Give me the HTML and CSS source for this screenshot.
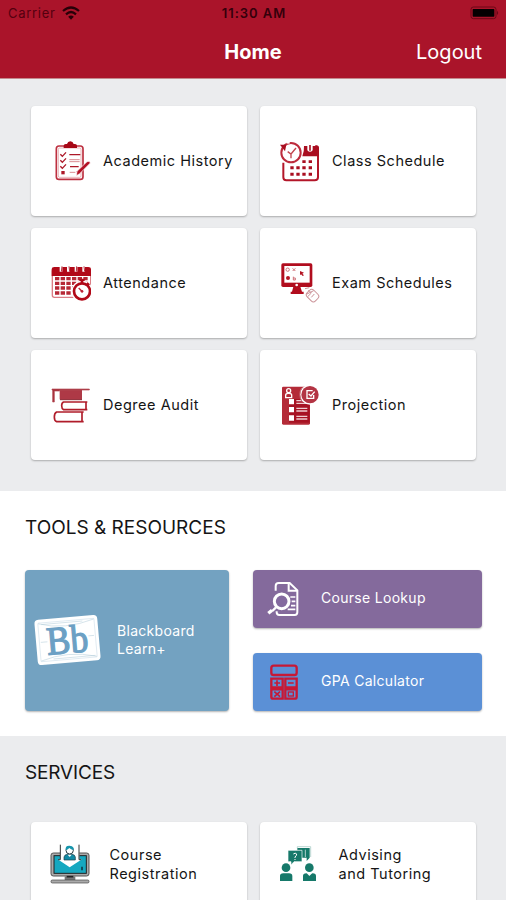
FILE: index.html
```html
<!DOCTYPE html>
<html lang="en">
<head>
<meta charset="utf-8">
<title>Home</title>
<link rel="stylesheet" href="styles.css">
</head>
<body>
<header class="header">
  <div class="status">
    <div class="status-left"><span class="carrier">Carrier</span>
      <svg class="wifi" viewBox="0 0 54 42"><g fill="none" stroke="#280008" stroke-width="6.5"><path d="M3 15Q27-6 51 15"/><path d="M12 25Q27 11 42 25"/></g><path d="M27 41L18.500 32Q27 25 35.500 32Z" fill="#280008"/></svg>
    </div>
    <span class="time">11:30 AM</span>
    <svg class="battery" viewBox="0 0 90 42"><rect x="3" y="3" width="75" height="35" rx="7" fill="none" stroke="#6c0717" stroke-width="3"/><rect x="8" y="9" width="65" height="23" rx="2" fill="#050001"/><path d="M81 14Q88 20 81 27Z" fill="#6c0717"/></svg>
  </div>
  <div class="nav"><h1 class="title">Home</h1><a class="logout">Logout</a></div>
</header>

<main>
<section class="grid">
  <div class="card">
    <svg class="icon" viewBox="0 0 120 126"><rect x="16" y="18" width="80" height="100" rx="8" fill="#fff" stroke="#bd3040" stroke-width="5"/><rect x="22" y="24" width="68" height="88" rx="4" fill="none" stroke="#df9298" stroke-width="2"/><path d="M38 24V17Q38 12 44 12H48Q50 4 58 4T68 12H72Q78 12 78 17V24Z" fill="#a70816"/><g fill="none" stroke="#ad1828" stroke-width="4"><path d="M28 43l6 6 11-12M28 61l6 6 11-12M28 79l6 6 11-12M55 44H88M57 80H83"/><path d="M55 59H86M55 65H86M56 97H73" stroke="#db8d92" stroke-width="3"/></g><rect x="31" y="93" width="10" height="10" fill="#ad1828"/><path d="M76 107L78 94L108 65Q116 61 118 69L86 101Z" fill="#b31225" stroke="#fff" stroke-width="2"/></svg>
    <span class="label">Academic History</span>
  </div>
  <div class="card">
    <svg class="icon" viewBox="0 0 120 126"><path d="M10 68V112Q10 121 19 121H104Q114 121 114 112V25Q114 18 106 18" fill="none" stroke="#b31629" stroke-width="6"/><path d="M72 18H82V31Q90 40 98 31V18H110Q117 18 117 25V49H67Q73 33 72 18Z" fill="#a90e20"/><path d="M90 15V32" stroke="#b73c4a" stroke-width="6"/><g fill="#a90e20"><path d="M67 61h10v8h-10zM86 61h10v8h-10zM31 79h10v9h-10zM49 79h10v9h-10zM67 79h10v9h-10zM86 79h10v9h-10zM31 98h10v9h-10zM49 98h10v9h-10zM67 98h10v9h-10zM86 98h10v9h-10z"/></g><circle cx="33" cy="38" r="29" fill="#fff" stroke="#bd2b3c" stroke-width="6"/><path d="M0 14L19 14L15 34Z" fill="#a90e20"/><path d="M20 7l9 1" stroke="#fff" stroke-width="7"/><path d="M23 35l10 7L48 24M33 42V55" fill="none" stroke="#c2454e" stroke-width="4"/></svg>
    <span class="label">Class Schedule</span>
  </div>
  <div class="card">
    <svg class="icon" viewBox="0 0 120 126"><rect x="4" y="22" width="115" height="84" rx="6" fill="#fff" stroke="#db7e86" stroke-width="4"/><path d="M2 42V21Q2 15 10 15H112Q120 15 120 21V42Z" fill="#b10918"/><path d="M30 11V29M52 11V29M75 11V29M98 11V29" stroke="#fff" stroke-width="8"/><path d="M33 13l-2 16M54 13l2 16M77 13l-1 16M99 13l2 16" stroke="#b73441" stroke-width="3"/><g stroke="#b62836" stroke-width="10" stroke-dasharray="13 4" fill="none"><path d="M12 50H114M12 64H114M12 78H90M12 93H70"/></g><circle cx="93" cy="88" r="32" fill="#fff"/><circle cx="93" cy="88" r="24" fill="#fff" stroke="#b10918" stroke-width="8"/><path d="M85 50H101V57H97V64H89V57H85ZM110 61L117 67L112 72L105 66Z" fill="#b10918"/><path d="M83 78L95 90" stroke="#bd2336" stroke-width="4"/><circle cx="93" cy="88" r="4" fill="#bd2336"/></svg>
    <span class="label">Attendance</span>
  </div>
  <div class="card">
    <svg class="icon" viewBox="0 0 120 126"><rect x="4" y="4" width="93" height="71" rx="5" fill="#b10d1e"/><path d="M13 12H89V62H13Z" fill="#fff"/><path d="M40 74H61L66 89H71V96H32V89H36Z" fill="#b10d1e"/><circle cx="50" cy="69" r="4" fill="#fff"/><g fill="none" stroke="#cf7279" stroke-width="3"><circle cx="23" cy="23" r="5"/><path d="M38 19l8 8M46 19l-8 8M40 44v10h6v-6h-6"/></g><circle cx="24" cy="48" r="6" fill="#b41423"/><path d="M60 27L72 32L67 35L72 40L68 42L63 37L60 40Z" fill="#b41423"/><g fill="none" stroke="#cb9298" stroke-width="3"><rect x="84" y="83" width="28" height="35" rx="9" transform="rotate(-45 98 101)"/><path d="M81 96L101 86M94 106L103 96M85 84L94 93L83 104M75 80l13-3"/></g></svg>
    <span class="label">Exam Schedules</span>
  </div>
  <div class="card">
    <svg class="icon" viewBox="0 0 120 126"><path d="M26 18H93V46H26Z" fill="#ae3946"/><path d="M3 18V15H115V18H26V21H10V54H5V20Z" fill="#a82e3a" stroke="#b24b54" stroke-width="2"/><path d="M27 47H93" stroke="#871d29" stroke-width="3"/><g fill="#fff" stroke="#b01c2a" stroke-width="5"><path d="M109 54H38Q32 56 32 65T38 77H109M105 54V77"/><path d="M98 84H17Q10 87 10 99T17 113H98M93 84V113"/></g></svg>
    <span class="label">Degree Audit</span>
  </div>
  <div class="card">
    <svg class="icon" viewBox="0 0 120 126"><rect x="6" y="8" width="84" height="114" rx="4" fill="#b42b38"/><path d="M27 45H89V116H27Z" fill="#a71223"/><circle cx="26" cy="20" r="6" fill="none" stroke="#fff" stroke-width="4"/><path d="M17 41V33Q17 28 26 28T35 33V41Z" fill="none" stroke="#fff" stroke-width="4"/><path d="M27 45h15v16h-15zM27 69h15v16h-15zM27 94h15v16h-15z" fill="#fff"/><path d="M49 50H72M49 58H82M49 73H82M49 81H82M49 97H82M49 105H82" stroke="#f0ccd0" stroke-width="4"/><circle cx="90" cy="32" r="30" fill="#fff"/><circle cx="90" cy="32" r="26" fill="#b33443"/><path d="M65 12Q54 31 65 51" fill="none" stroke="#c76e78" stroke-width="3"/><path d="M101 33V43H81V20H98M86 30l7 6 11-13" fill="none" stroke="#fff" stroke-width="4"/></svg>
    <span class="label">Projection</span>
  </div>
</section>

<section class="tools">
  <h2 class="heading">TOOLS &amp; RESOURCES</h2>
  <div class="tool-grid">
    <div class="tile blackboard">
      <svg class="bb" viewBox="0 0 204 162"><g transform="rotate(-5 102 81)"><rect x="6" y="13" width="189" height="136" rx="12" fill="#fff"/><rect x="16" y="23" width="169" height="116" rx="2" fill="none" stroke="#c5d9e6" stroke-width="1.500"/><path d="M17 25Q95 51 184 25M17 137Q98 112 184 137M26 28H150M54 134H180M20 81H40M164 74H181" stroke="#afcad9" stroke-width="1.500" fill="none"/><text x="38" y="120" textLength="124" lengthAdjust="spacingAndGlyphs" font-family="Liberation Serif, serif" font-size="119" fill="#6ca0c4" stroke="#6ca0c4" stroke-width="4">Bb</text></g></svg>
      <span class="tile-label">Blackboard<br>Learn+</span>
    </div>
    <div class="tool-stack">
      <div class="tile lookup">
        <svg class="tool-icon" viewBox="0 0 102 108"><path d="M26 29V15Q26 6 35 6H68L91 28V94Q91 102 83 102H37Q29 102 29 94V91" fill="none" stroke="#fff" stroke-width="6"/><path d="M65 6V29H91" fill="none" stroke="#fff" stroke-width="6"/><path d="M70 48H85M74 61H85M72 74H85M62 85H85" stroke="#fff" stroke-width="5"/><circle cx="44" cy="61" r="22" fill="#846a9f" stroke="#fff" stroke-width="9"/><path d="M27 79L16 90" stroke="#fff" stroke-width="7"/><path d="M15 88L4 97" stroke="#fff" stroke-width="10"/></svg>
        <span class="tile-label">Course Lookup</span>
      </div>
      <div class="tile gpa">
        <svg class="tool-icon" viewBox="0 0 102 108"><g fill="none" stroke="#c71835" stroke-width="7"><rect x="13" y="5" width="76" height="28" rx="7"/><path d="M13 44H47V70H13ZM55 44H89V70H55ZM13 76H47V104H19Q13 104 13 98ZM55 76H89V98Q89 104 83 104H55Z"/><path d="M22 57H39M30 49V66M63 57H80M22 83L39 98M39 83L22 98" stroke-width="5"/><rect x="64" y="84" width="15" height="12" stroke-width="4"/></g></svg>
        <span class="tile-label">GPA Calculator</span>
      </div>
    </div>
  </div>
</section>

<section class="services">
  <h2 class="heading">SERVICES</h2>
  <div class="service-grid">
    <div class="card service">
      <svg class="icon" viewBox="0 0 120 126"><rect x="3" y="30" width="114" height="69" rx="7" fill="#aaa" stroke="#555" stroke-width="3"/><rect x="12" y="38" width="97" height="53" fill="#16a8c0" stroke="#222" stroke-width="3"/><path d="M44 100H76V112H44Z" fill="#777"/><path d="M50 101H70" stroke="#222" stroke-width="5"/><rect x="3" y="111" width="114" height="9" rx="4" fill="#aaa" stroke="#444" stroke-width="2"/><path d="M30 3H88V49H96L59 73L23 49H30Z" fill="#fff"/><path d="M31 5V50H24M87 5V50H94" stroke="#333" stroke-width="3" fill="none"/><path d="M42 51V42Q43 35 52 34H66Q75 35 76 42V51Z" fill="#118aa4" stroke="#243b43" stroke-width="2"/><circle cx="59" cy="22" r="11" fill="#fff" stroke="#293c43" stroke-width="3"/><path d="M47 21Q45 7 59 8T71 21Q62 20 58 15Q53 21 47 21Z" fill="#1696ad"/><path d="M53 35L59 42L65 35Z" fill="#fff"/><path d="M96 71V82" stroke="#123c49" stroke-width="5"/></svg>
      <span class="label">Course<br>Registration</span>
    </div>
    <div class="card service">
      <svg class="icon" viewBox="0 0 120 126"><g fill="#16796a"><path d="M55 15H92V44L83 54V44H55Z"/><path d="M27 22H69V56H45L36 66V56H27Z" stroke="#fff" stroke-width="2"/><circle cx="21" cy="74" r="13"/><circle cx="91" cy="74" r="13"/><path d="M3 114V99Q3 91 13 91H30Q40 91 40 99V114ZM72 114V99Q72 91 82 91H101Q111 91 111 99V114Z"/></g><path d="M55 16V11H95V42" stroke="#9ac4bd" stroke-width="2" fill="none"/><path d="M43 33Q49 28 53 33Q53 38 48 42V45M48 48V51" stroke="#fff" stroke-width="3" fill="none"/><path d="M79 20V42" stroke="#fff" stroke-width="2"/><path d="M82 89L91 99L101 89" fill="#fff"/></svg>
      <span class="label">Advising<br>and Tutoring</span>
    </div>
  </div>
</section>
</main>
</body>
</html>
```

FILE: styles.css
```css
* { box-sizing: border-box; }
html { overflow: hidden; }
body {
  margin: 0;
  width: 506px;
  height: 900px;
  overflow: hidden;
  background: #ebecee;
  color: #151515;
  font-family: Inter, "Liberation Sans", sans-serif;
}
.header {
  height: 79px;
  background: #aa142a;
  border-bottom: 1px solid #c38a8e;
}
.status {
  display: grid;
  grid-template-columns: 1fr auto 1fr;
  align-items: center;
  height: 26px;
  padding: 0 6px 0 8px;
  color: #35000b;
  font-size: 13px;
}
.status-left { display: flex; align-items: center; gap: 6px; }
.carrier { color: #54000f; letter-spacing: 0.7px; }
.wifi { width: 18px; height: 14px; }
.time { font-weight: 600; letter-spacing: 0.95px; }
.battery { width: 30px; height: 14px; justify-self: end; }
.nav {
  display: grid;
  grid-template-columns: 1fr auto 1fr;
  align-items: center;
  height: 52px;
  padding: 0 24px;
  color: #fff;
}
.title { grid-column: 2; margin: 0; font-size: 20px; font-weight: 700; }
.logout { justify-self: end; font-size: 20px; }
.grid {
  display: grid;
  grid-template-columns: 216px 216px;
  grid-auto-rows: 110px;
  gap: 12.300px 13px;
  height: 412px;
  padding: 26.600px 30px 0 31px;
}
.card {
  display: flex;
  align-items: center;
  padding-left: 20px;
  gap: 12px;
  border-radius: 4px;
  background: #fff;
  box-shadow: 0 1px 2px rgba(0, 0, 0, 0.28);
}
.icon { flex: none; width: 40px; height: 42px; }
.label { padding-top: 1px; font-size: 14.500px; letter-spacing: 0.52px; line-height: 18.500px; white-space: nowrap; }
.heading { margin: 0; font-size: 19px; font-weight: 400; line-height: 24px; }
.tools { height: 245px; padding: 25px 24px 0 25px; background: #fff; }
.tool-grid { display: grid; grid-template-columns: 204px 229px; gap: 24px; margin-top: 30px; height: 141px; }
.tile {
  display: flex;
  align-items: center;
  color: #fff;
  border-radius: 4px;
  box-shadow: 0 1px 2px rgba(0, 0, 0, 0.3);
}
.blackboard { background: #73a2c1; padding-left: 9px; gap: 15px; }
.bb { width: 68px; height: 54px; margin-top: -2px; }
.tool-stack { display: grid; grid-template-rows: 58px 58px; gap: 25px; }
.lookup { background: #846a9c; }
.gpa { background: #5b90d6; }
.lookup, .gpa { padding-left: 14px; gap: 20px; }
.tool-icon { width: 34px; height: 36px; }
.tile-label { margin-top: -2px; font-size: 14px; letter-spacing: 0.3px; line-height: 17.500px; white-space: nowrap; }
.services { padding: 25px 30px 0 31px; }
.services .heading { margin-left: -6px; letter-spacing: -0.15px; }
.service-grid { display: grid; grid-template-columns: 216px 216px; gap: 13px; margin-top: 36.500px; }
.service { height: 110px; align-items: flex-start; padding: 21px 0 0 19px; gap: 19.500px; }
.service .label { margin-top: 2.500px; }
```
